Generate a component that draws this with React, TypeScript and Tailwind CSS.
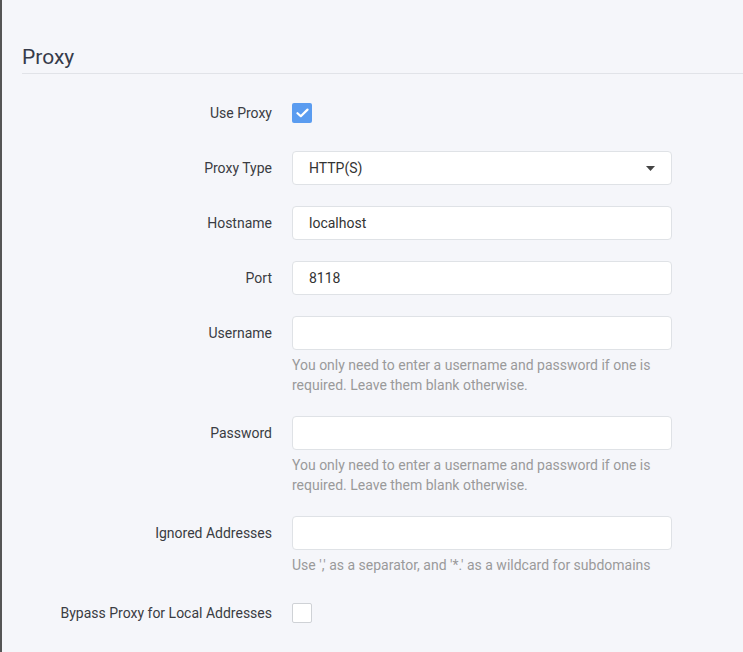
const labelCls =
  "w-[250px] shrink-0 text-right text-[14px] leading-[34px] font-normal text-[#3a3c42]";
const inputCls =
  "h-[34px] w-[380px] rounded-[4px] border border-[#dfe2e6] bg-white pl-4 text-[14px] text-[#333] outline-none";
const helpCls = "mt-[5px] w-[380px] text-[14px] leading-[20px] text-[#9a9a9a]";

type RowProps = {
  label: string;
  children: React.ReactNode;
};

const Row = ({ label, children }: RowProps) => (
  <div className="flex items-start gap-5">
    <div className={labelCls}>{label}</div>
    <div className="flex flex-col">{children}</div>
  </div>
);

const Checkbox = ({ checked }: { checked?: boolean }) => (
  <div className="flex h-[34px] items-center">
    {checked ? (
      <div className="flex h-5 w-5 items-center justify-center rounded-[2px] bg-[#5a9cf0]">
        <svg width="13" height="10" viewBox="0 0 13 10" fill="none">
          <path
            d="M1.5 5.2 L4.8 8.2 L11.5 1.6"
            stroke="white"
            strokeWidth="2.2"
            strokeLinecap="round"
            strokeLinejoin="round"
          />
        </svg>
      </div>
    ) : (
      <div className="h-5 w-5 rounded-[2px] border border-[#cfd2d6] bg-white" />
    )}
  </div>
);

const TextInput = ({ value }: { value?: string }) => (
  <input className={inputCls} defaultValue={value} />
);

const App = () => {
  return (
    <div
      className="min-h-[652px] w-full border-l-2 border-[#555] bg-[#f5f6fa] pl-5 pt-[43px]"
      style={{ fontFamily: "Roboto, 'Liberation Sans', sans-serif" }}
    >
      <h2 className="border-b border-[#e1e3e8] pb-[2px] text-[21px] leading-[28px] font-normal text-[#363b4a]">
        Proxy
      </h2>

      <div className="flex flex-col gap-[21px] pt-[22px]">
        <Row label="Use Proxy">
          <Checkbox checked />
        </Row>

        <Row label="Proxy Type">
          <div className="relative flex h-[34px] w-[380px] items-center rounded-[4px] border border-[#dfe2e6] bg-white pl-4 text-[14px] text-[#333]">
            HTTP(S)
            <svg
              className="absolute right-4 top-[14px]"
              width="9"
              height="5"
              viewBox="0 0 9 5"
            >
              <path d="M0 0 H9 L4.5 5 Z" fill="#444" />
            </svg>
          </div>
        </Row>

        <Row label="Hostname">
          <TextInput value="localhost" />
        </Row>

        <Row label="Port">
          <TextInput value="8118" />
        </Row>

        <Row label="Username">
          <TextInput />
          <p className={helpCls}>
            You only need to enter a username and password if one is required.
            Leave them blank otherwise.
          </p>
        </Row>

        <Row label="Password">
          <TextInput />
          <p className={helpCls}>
            You only need to enter a username and password if one is required.
            Leave them blank otherwise.
          </p>
        </Row>

        <Row label="Ignored Addresses">
          <TextInput />
          <p className={helpCls}>
            Use ',' as a separator, and '*.' as a wildcard for subdomains
          </p>
        </Row>

        <Row label="Bypass Proxy for Local Addresses">
          <Checkbox />
        </Row>
      </div>
    </div>
  );
};

export default App;
